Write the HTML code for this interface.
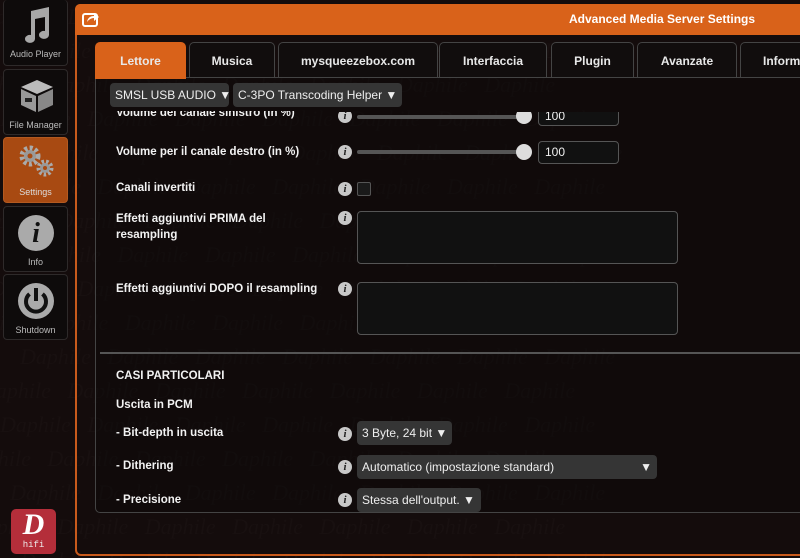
<!DOCTYPE html>
<html><head><meta charset="utf-8"><style>
*{margin:0;padding:0;box-sizing:border-box}
body{width:800px;height:558px;overflow:hidden;background:#140c0c;font-family:"Liberation Sans","DejaVu Sans",sans-serif;color:#f0f0f0;position:relative}
.a{position:absolute}
.wm{position:absolute;left:0;top:0;width:800px;height:558px;overflow:hidden;color:rgba(255,255,255,0.018);font-family:"Liberation Serif",serif;font-style:italic;font-size:22px;line-height:34px;white-space:nowrap}
.sb{position:absolute;left:3px;width:65px;border:1px solid #2e2a2a;border-radius:4px;background:#0e0b0b;color:#bbb;font-size:9px;text-align:center}
.sb span{position:absolute;left:0;right:0}
.tab{position:absolute;top:42px;height:36px;border:1px solid #444;border-bottom:none;border-radius:5px 5px 0 0;background:#110d0d;font-size:12px;font-weight:bold;text-align:center;line-height:36px;color:#e8e8e8;white-space:nowrap;overflow:hidden}
.lbl{position:absolute;left:116px;font-size:11.5px;font-weight:bold;color:#f2f2f2;white-space:nowrap}
.inf{position:absolute;left:338px;width:14px;height:14px;border-radius:50%;background:#c8c8c8;color:#222;font:bold italic 11px "Liberation Serif",serif;text-align:center;line-height:14px}
.sel{position:absolute;background:#353535;border-radius:4px;font-size:12px;color:#eee;line-height:24px;padding-left:5px;height:24px;white-space:nowrap;overflow:hidden}
.ta{position:absolute;left:357px;width:321px;height:53px;background:#111;border:1px solid #555;border-radius:4px}
</style></head><body>
<div class="wm">
<div style="margin-left:-20px">Daphile &nbsp; Daphile &nbsp; Daphile &nbsp; Daphile &nbsp; Daphile &nbsp; Daphile &nbsp; Daphile</div>
<div style="margin-left:20px">Daphile &nbsp; Daphile &nbsp; Daphile &nbsp; Daphile &nbsp; Daphile &nbsp; Daphile &nbsp; Daphile</div>
<div style="margin-left:-40px">Daphile &nbsp; Daphile &nbsp; Daphile &nbsp; Daphile &nbsp; Daphile &nbsp; Daphile &nbsp; Daphile</div>
<div style="margin-left:0">Daphile &nbsp; Daphile &nbsp; Daphile &nbsp; Daphile &nbsp; Daphile &nbsp; Daphile &nbsp; Daphile</div>
<div style="margin-left:-60px">Daphile &nbsp; Daphile &nbsp; Daphile &nbsp; Daphile &nbsp; Daphile &nbsp; Daphile &nbsp; Daphile &nbsp; Daphile</div>
<div style="margin-left:10px">Daphile &nbsp; Daphile &nbsp; Daphile &nbsp; Daphile &nbsp; Daphile &nbsp; Daphile &nbsp; Daphile</div>
<div style="margin-left:-30px">Daphile &nbsp; Daphile &nbsp; Daphile &nbsp; Daphile &nbsp; Daphile &nbsp; Daphile &nbsp; Daphile</div>
<div style="margin-left:30px">Daphile &nbsp; Daphile &nbsp; Daphile &nbsp; Daphile &nbsp; Daphile &nbsp; Daphile &nbsp; Daphile</div>
<div style="margin-left:-10px">Daphile &nbsp; Daphile &nbsp; Daphile &nbsp; Daphile &nbsp; Daphile &nbsp; Daphile &nbsp; Daphile</div>
<div style="margin-left:-50px">Daphile &nbsp; Daphile &nbsp; Daphile &nbsp; Daphile &nbsp; Daphile &nbsp; Daphile &nbsp; Daphile &nbsp; Daphile</div>
<div style="margin-left:20px">Daphile &nbsp; Daphile &nbsp; Daphile &nbsp; Daphile &nbsp; Daphile &nbsp; Daphile &nbsp; Daphile</div>
<div style="margin-left:-20px">Daphile &nbsp; Daphile &nbsp; Daphile &nbsp; Daphile &nbsp; Daphile &nbsp; Daphile &nbsp; Daphile</div>
<div style="margin-left:0">Daphile &nbsp; Daphile &nbsp; Daphile &nbsp; Daphile &nbsp; Daphile &nbsp; Daphile &nbsp; Daphile</div>
<div style="margin-left:-40px">Daphile &nbsp; Daphile &nbsp; Daphile &nbsp; Daphile &nbsp; Daphile &nbsp; Daphile &nbsp; Daphile</div>
<div style="margin-left:10px">Daphile &nbsp; Daphile &nbsp; Daphile &nbsp; Daphile &nbsp; Daphile &nbsp; Daphile &nbsp; Daphile</div>
<div style="margin-left:-30px">Daphile &nbsp; Daphile &nbsp; Daphile &nbsp; Daphile &nbsp; Daphile &nbsp; Daphile &nbsp; Daphile</div>
<div style="margin-left:20px">Daphile &nbsp; Daphile &nbsp; Daphile &nbsp; Daphile &nbsp; Daphile &nbsp; Daphile &nbsp; Daphile</div>
</div>

<!-- sidebar -->
<div class="sb" style="top:0;height:66px;border-top:none">
<svg class="a" style="left:18px;top:5px" width="30" height="38" viewBox="0 0 30 38"><path d="M9 6 L27 2 L27 30 A5 4 0 1 1 23 26 L23 12 L13 14 L13 34 A5 4 0 1 1 9 30Z" fill="#a8a8a8"/></svg>
<span style="top:49px">Audio Player</span></div>
<div class="sb" style="top:69px;height:66px">
<svg class="a" style="left:14px;top:8px" width="38" height="36" viewBox="0 0 38 36"><path d="M3 9 L19 2 L35 9 L19 16Z" fill="#bbb"/><path d="M3 11 L18 18 L18 34 L3 27Z" fill="#999"/><path d="M20 18 L35 11 L35 27 L20 34Z" fill="#888"/><rect x="7" y="20" width="7" height="4" fill="#222"/></svg>
<span style="top:50px">File Manager</span></div>
<div class="sb" style="top:137px;height:66px;background:#a84a12;border-color:#b45a20;color:#ddd">
<svg class="a" style="left:14px;top:6px" width="38" height="34" viewBox="0 0 38 34"><circle cx="12" cy="12" r="8" fill="none" stroke="#aaa" stroke-width="5" stroke-dasharray="3 2.3"/><circle cx="12" cy="12" r="6" fill="#999"/><circle cx="12" cy="12" r="2.5" fill="#a84a12"/><circle cx="27" cy="24" r="6.5" fill="none" stroke="#aaa" stroke-width="4" stroke-dasharray="2.5 2"/><circle cx="27" cy="24" r="5" fill="#999"/><circle cx="27" cy="24" r="2" fill="#a84a12"/></svg>
<span style="top:49px">Settings</span></div>
<div class="sb" style="top:206px;height:66px">
<div class="a" style="left:14px;top:8px;width:36px;height:36px;border-radius:50%;background:#aaa;color:#111;font:bold italic 28px 'Liberation Serif',serif;line-height:37px">i</div>
<span style="top:50px">Info</span></div>
<div class="sb" style="top:274px;height:66px">
<svg class="a" style="left:14px;top:8px" width="36" height="36" viewBox="0 0 36 36"><circle cx="18" cy="18" r="18" fill="#aaa"/><path d="M11.5 11 A10 10 0 1 0 24.5 11" fill="none" stroke="#111" stroke-width="4"/><rect x="16" y="5" width="4" height="13" fill="#111"/></svg>
<span style="top:50px">Shutdown</span></div>
<div class="a" style="left:11px;top:509px;width:45px;height:45px;background:#b42e3a;border-radius:5px;color:#fff;text-align:center">
<div style="font:bold italic 30px 'Liberation Serif',serif;line-height:32px">D</div>
<div style="font:9px 'Liberation Mono',monospace;line-height:8px;color:#eee">hifi</div></div>

<!-- panel -->
<div class="a" style="left:75px;top:4px;width:740px;height:552px;border:2px solid #c85a1c;border-radius:6px"></div>
<div class="a" style="left:75px;top:4px;width:730px;height:31px;background:#d9621a;border-radius:5px 5px 0 0"></div>
<svg class="a" style="left:82px;top:11px" width="18" height="16" viewBox="0 0 18 16"><rect x="1" y="3" width="14" height="12" rx="2" fill="none" stroke="#fff" stroke-width="2"/><path d="M5 11 Q6 5 12 5 L12 2 L17 6 L12 10 L12 7 Q8 7 5 11Z" fill="#fff"/></svg>
<div class="a" style="left:569px;top:12px;font-size:12px;font-weight:bold;color:#fff">Advanced Media Server Settings</div>

<div class="tab" style="left:95px;width:91px;background:#d9621a;border-color:#d9621a">Lettore</div>
<div class="tab" style="left:189px;width:86px">Musica</div>
<div class="tab" style="left:278px;width:160px">mysqueezebox.com</div>
<div class="tab" style="left:439px;width:108px">Interfaccia</div>
<div class="tab" style="left:551px;width:83px">Plugin</div>
<div class="tab" style="left:637px;width:100px">Avanzate</div>
<div class="tab" style="left:740px;width:70px;text-align:left;padding-left:22px">Informazioni</div>

<div class="a" style="left:95px;top:77px;width:720px;height:436px;border:1px solid #444;border-radius:0 0 5px 5px;background:rgba(10,8,8,0.35)"></div>
<div class="a" style="left:95px;top:77px;width:91px;height:2px;background:#d9621a"></div>

<div class="lbl" style="top:107px;clip-path:inset(4px 0 0 0)">Volume del canale sinistro (in %)</div>
<div class="inf" style="top:109px;clip-path:inset(3px 0 0 0)">i</div>
<div class="a" style="left:357px;top:115px;width:170px;height:4px;background:#555;border-radius:2px"></div>
<div class="a" style="left:516px;top:108px;width:16px;height:16px;border-radius:50%;background:#ddd;clip-path:inset(4px 0 0 0)"></div>
<div class="a" style="left:538px;top:106px;width:81px;height:20px;background:#111;border:1px solid #555;border-radius:4px;font-size:12px;padding-left:6px;line-height:18px;clip-path:inset(6px 0 0 0)">100</div>

<div class="sel" style="left:110px;top:83px;width:119px">SMSL USB AUDIO ▼</div>
<div class="sel" style="left:233px;top:83px;width:169px">C-3PO Transcoding Helper ▼</div>

<div class="lbl" style="top:146px">Volume per il canale destro (in %)</div>
<div class="inf" style="top:145px">i</div>
<div class="a" style="left:357px;top:150px;width:170px;height:4px;background:#555;border-radius:2px"></div>
<div class="a" style="left:516px;top:144px;width:16px;height:16px;border-radius:50%;background:#ddd"></div>
<div class="a" style="left:538px;top:141px;width:81px;height:23px;background:#111;border:1px solid #555;border-radius:4px;font-size:12px;padding-left:6px;line-height:21px">100</div>

<div class="lbl" style="top:182px">Canali invertiti</div>
<div class="inf" style="top:182px">i</div>
<div class="a" style="left:357px;top:182px;width:14px;height:14px;border:1px solid #555;border-radius:2px;background:#1a1a1a"></div>

<div class="lbl" style="top:211px;line-height:16px">Effetti aggiuntivi PRIMA del<br>resampling</div>
<div class="inf" style="top:211px">i</div>
<div class="ta" style="top:211px"></div>

<div class="lbl" style="top:283px">Effetti aggiuntivi DOPO il resampling</div>
<div class="inf" style="top:282px">i</div>
<div class="ta" style="top:282px"></div>

<div class="a" style="left:100px;top:352px;width:710px;height:2px;background:#555"></div>

<div class="lbl" style="top:370px">CASI PARTICOLARI</div>
<div class="lbl" style="top:399px">Uscita in PCM</div>
<div class="lbl" style="top:427px">- Bit-depth in uscita</div>
<div class="inf" style="top:427px">i</div>
<div class="sel" style="left:357px;top:421px;width:95px">3 Byte, 24 bit ▼</div>
<div class="lbl" style="top:460px">- Dithering</div>
<div class="inf" style="top:460px">i</div>
<div class="sel" style="left:357px;top:455px;width:300px">Automatico (impostazione standard)<span style="position:absolute;right:5px">▼</span></div>
<div class="lbl" style="top:494px">- Precisione</div>
<div class="inf" style="top:493px">i</div>
<div class="sel" style="left:357px;top:488px;width:124px">Stessa dell'output. ▼</div>
</body></html>
